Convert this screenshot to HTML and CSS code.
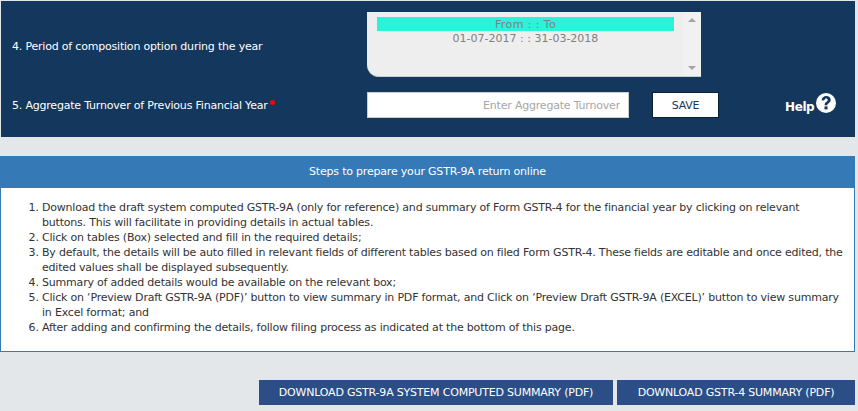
FILE: index.html
```html
<!DOCTYPE html>
<html lang="en">
<head>
  <meta charset="UTF-8">
  <title>GSTR-9A</title>
  <link rel="stylesheet" href="styles.css">
</head>
<body>

<div class="panel">
  <div class="row period-row">
    <label class="row-label period-label">4. Period of composition option during the year</label>
    <div class="period-box">
      <div class="period-list">
        <div class="period-head">From : : To</div>
        <div class="period-item">01-07-2017 : : 31-03-2018</div>
      </div>
      <div class="scroll">
        <span class="arrow-up"></span>
        <span class="arrow-down"></span>
      </div>
    </div>
  </div>
  <div class="row turnover-row">
    <label class="row-label">5. Aggregate Turnover of Previous Financial Year<span class="req"></span></label>
    <input class="turnover-input" type="text" placeholder="Enter Aggregate Turnover">
    <button class="save-btn">SAVE</button>
    <div class="help">
      <span>Help</span>
      <svg class="help-icon" viewBox="0 0 20 20">
        <circle cx="10" cy="10" r="10" fill="#fff"/>
        <path d="M5.6 7.4C5.8 4.6 7.7 3 10.2 3c2.6 0 4.5 1.5 4.5 3.8 0 1.7-.9 2.6-2.1 3.4-.9.6-1.2 1-1.2 2H8.6c0-1.7.4-2.5 1.6-3.3 1-.7 1.5-1.1 1.5-1.9 0-.9-.6-1.5-1.5-1.5-1 0-1.6.7-1.7 1.7z" fill="#14375d"/>
        <rect x="8.5" y="13.4" width="3" height="3" fill="#14375d"/>
      </svg>
    </div>
  </div>
</div>

<div class="steps">
  <div class="steps-head">Steps to prepare your GSTR-9A return online</div>
  <div class="steps-body">
    <ol>
      <li>Download the draft system computed GSTR-9A (only for reference) and summary of Form GSTR-4 for the financial year by clicking on relevant buttons. This will facilitate in providing details in actual tables.</li>
      <li>Click on tables (Box) selected and fill in the required details;</li>
      <li>By default, the details will be auto filled in relevant fields of different tables based on filed Form GSTR-4. These fields are editable and once edited, the edited values shall be displayed subsequently.</li>
      <li>Summary of added details would be available on the relevant box;</li>
      <li>Click on ‘Preview Draft GSTR-9A (PDF)’ button to view summary in PDF format, and Click on ‘Preview Draft GSTR-9A (EXCEL)’ button to view summary in Excel format; and</li>
      <li>After adding and confirming the details, follow filing process as indicated at the bottom of this page.</li>
    </ol>
  </div>
</div>

<div class="downloads">
  <button class="dl-btn dl-wide">DOWNLOAD GSTR-9A SYSTEM COMPUTED SUMMARY (PDF)</button>
  <button class="dl-btn dl-small">DOWNLOAD GSTR-4 SUMMARY (PDF)</button>
</div>

</body>
</html>
```

FILE: styles.css
```css
body {
  margin: 0;
  background-color: #e4e7ea;
  font-family: 'DejaVu Sans', sans-serif;
  font-size: 11px;
  letter-spacing: -0.2px;
  color: #333;
  overflow: hidden;
}

.panel {
  margin: 1px 3px 0 1px;
  height: 136px;
  background-color: #14375d;
  color: #fff;
}

.row {
  display: flex;
  align-items: center;
  padding-left: 11px;
}

.period-row {
  padding-top: 11px;
}

.turnover-row {
  margin-top: 15px;
}

.row-label {
  width: 355px;
}

.period-label {
  margin-top: 4px;
}

.req {
  display: inline-block;
  width: 5px;
  height: 5px;
  margin-left: 2px;
  border-radius: 50%;
  background-color: #f00;
  vertical-align: 4px;
}

.period-box {
  display: flex;
  width: 334px;
  height: 65px;
  background-color: #eee;
  border-bottom-left-radius: 12px;
  box-sizing: border-box;
  border-bottom: 1px solid #ccc;
}

.period-list {
  flex: 1;
  padding: 5px 9px 0 10px;
  color: #808080;
  text-align: center;
  line-height: 16px;
  letter-spacing: 0;
}

.period-head {
  height: 14px;
  background-color: #2bf3d9;
  letter-spacing: 0.4px;
}

.scroll {
  width: 18px;
  background-color: #f1f1f1;
  display: flex;
  flex-direction: column;
  justify-content: space-between;
  align-items: center;
  padding: 6px 0;
  box-sizing: border-box;
}

.arrow-up, .arrow-down {
  width: 0;
  height: 0;
  border-left: 4px solid transparent;
  border-right: 4px solid transparent;
}

.arrow-up { border-bottom: 4px solid #a3a3a3; }
.arrow-down { border-top: 4px solid #a3a3a3; }

.turnover-input {
  width: 262px;
  height: 26px;
  box-sizing: border-box;
  border: 1px solid #ccc;
  padding: 0 8px;
  text-align: right;
  font-family: inherit;
  font-size: 11px;
  letter-spacing: -0.2px;
  outline: none;
}

.turnover-input::placeholder {
  color: #a6a6a6;
}

.save-btn {
  width: 67px;
  height: 26px;
  margin-left: 23px;
  border: 1px solid #0b2038;
  background-color: #fff;
  color: #14375d;
  font-family: inherit;
  font-size: 11px;
  letter-spacing: -0.2px;
  padding: 0;
}

.help {
  display: flex;
  align-items: center;
  gap: 2px;
  margin-left: 66px;
  font-weight: bold;
  font-size: 12px;
  letter-spacing: -0.4px;
}

.help span {
  margin-top: 4px;
}

.help-icon {
  width: 20px;
  height: 20px;
  margin-top: -5px;
}

.steps {
  margin: 19px 3px 0 0;
}

.steps-head {
  height: 32px;
  line-height: 32px;
  background-color: #3579b6;
  color: #fff;
  text-align: center;
}

.steps-body {
  height: 164px;
  box-sizing: border-box;
  background-color: #fff;
  border: 1px solid #3579b6;
  border-top: none;
  padding-top: 12px;
  line-height: 15px;
}

.steps-body ol {
  margin: 0;
  padding: 0 10px 0 41px;
}

.downloads {
  display: flex;
  justify-content: flex-end;
  gap: 4px;
  margin: 28px 3px 0 0;
}

.dl-btn {
  height: 25px;
  border: none;
  padding: 0;
  background-color: #2c4e86;
  color: #fff;
  font-family: inherit;
  font-size: 11px;
  letter-spacing: -0.2px;
}

.dl-wide { width: 354px; }
.dl-small { width: 238px; }
```
